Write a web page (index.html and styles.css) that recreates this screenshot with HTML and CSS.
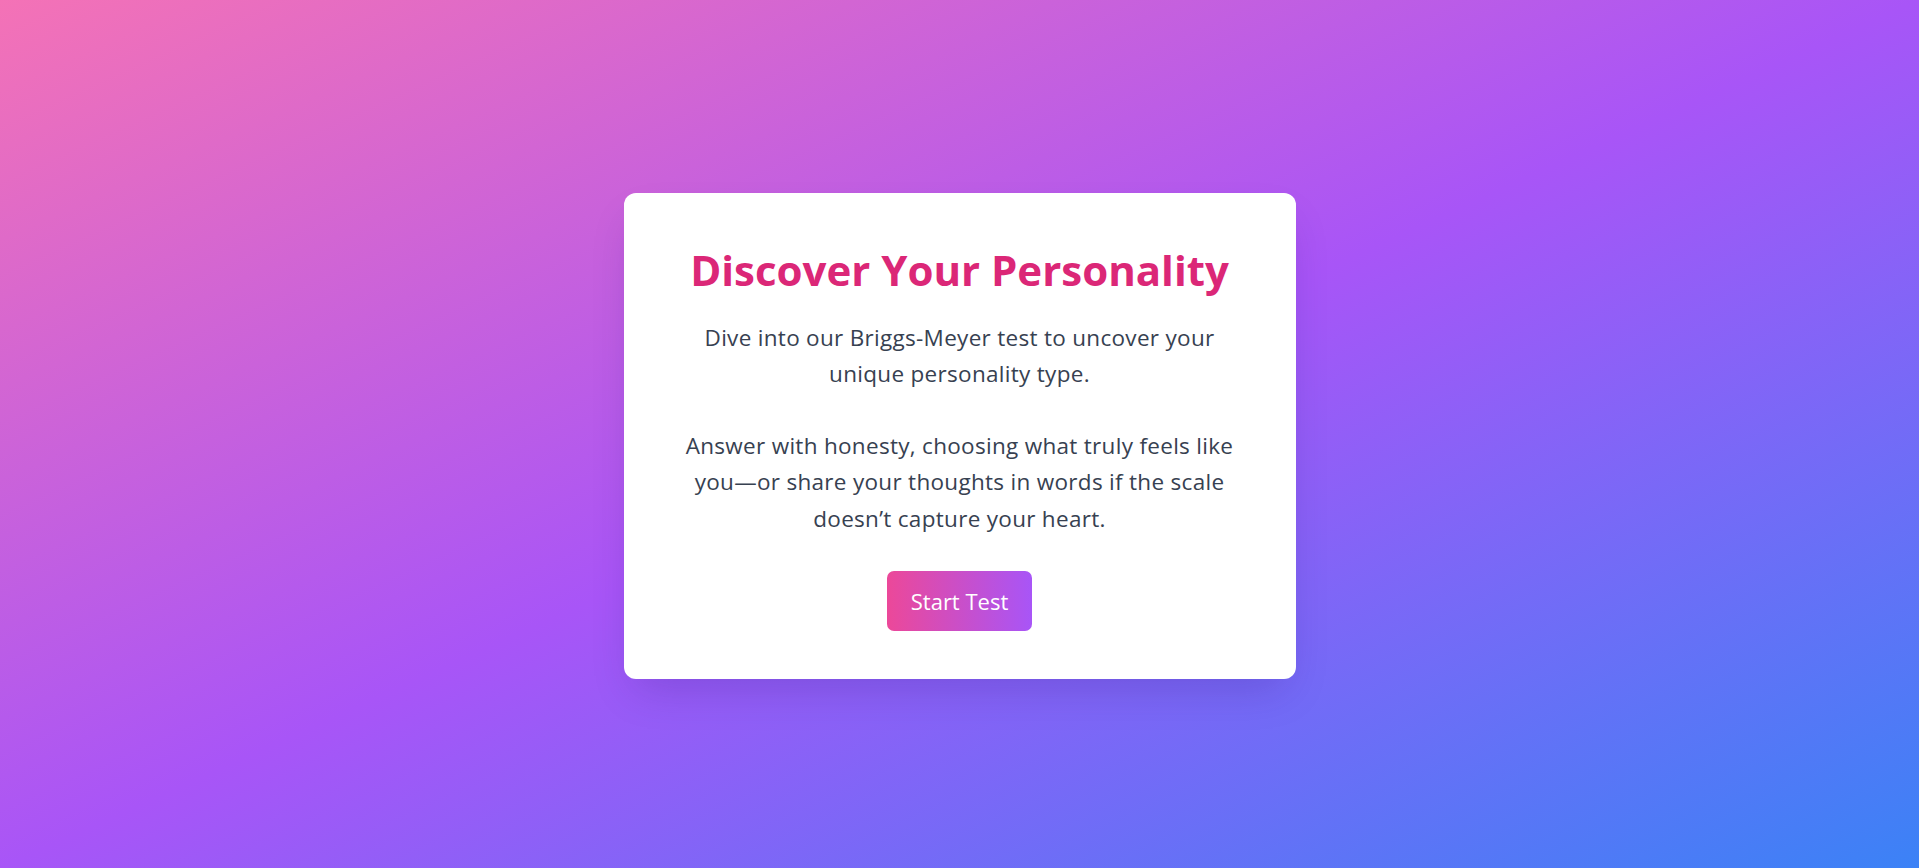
FILE: index.html
```html
<!DOCTYPE html>
<html lang="en">
<head>
<meta charset="utf-8">
<title>Discover Your Personality</title>
<link rel="stylesheet" href="styles.css">
</head>
<body>
  <main class="page">
    <section class="card">
      <h1 class="title">Discover Your Personality</h1>
      <p class="text">Dive into our Briggs-Meyer test to uncover your unique personality type.</p>
      <p class="text">Answer with honesty, choosing what truly feels like you—or share your thoughts in words if the scale doesn’t capture your heart.</p>
      <button class="start-btn" type="button">Start Test</button>
    </section>
  </main>
</body>
</html>
```

FILE: styles.css
```css
* { box-sizing: border-box; }

html, body {
  margin: 0;
  padding: 0;
  height: 100%;
}

body {
  font-family: "Open Sans", "Noto Sans", "Liberation Sans", sans-serif;
  background: linear-gradient(to bottom right, #f472b6 0%, #a855f7 50%, #3b82f6 100%);
}

.page {
  min-height: 100vh;
  display: flex;
  align-items: center;
  justify-content: center;
  padding-top: 4px;
}

.card {
  width: 672px;
  background: #ffffff;
  border-radius: 12px;
  padding: 48px;
  text-align: center;
  display: flex;
  flex-direction: column;
  align-items: center;
  box-shadow: 0 20px 40px -12px rgba(40, 20, 120, 0.22);
}

.title {
  margin: 0 0 22px;
  font-size: 42px;
  line-height: 57px;
  font-weight: 700;
  color: #db2777;
}

.text {
  margin: 0;
  max-width: 560px;
  font-size: 22.5px;
  letter-spacing: 0.3px;
  line-height: 36.5px;
  color: #374151;
}

.text + .text {
  margin-top: 35px;
}

.start-btn {
  margin-top: 34px;
  width: 145px;
  height: 60px;
  border: none;
  border-radius: 7px;
  font-family: inherit;
  font-size: 22px;
  color: #ffffff;
  background: linear-gradient(to right, #ec4899, #a855f7);
  cursor: pointer;
}
```
